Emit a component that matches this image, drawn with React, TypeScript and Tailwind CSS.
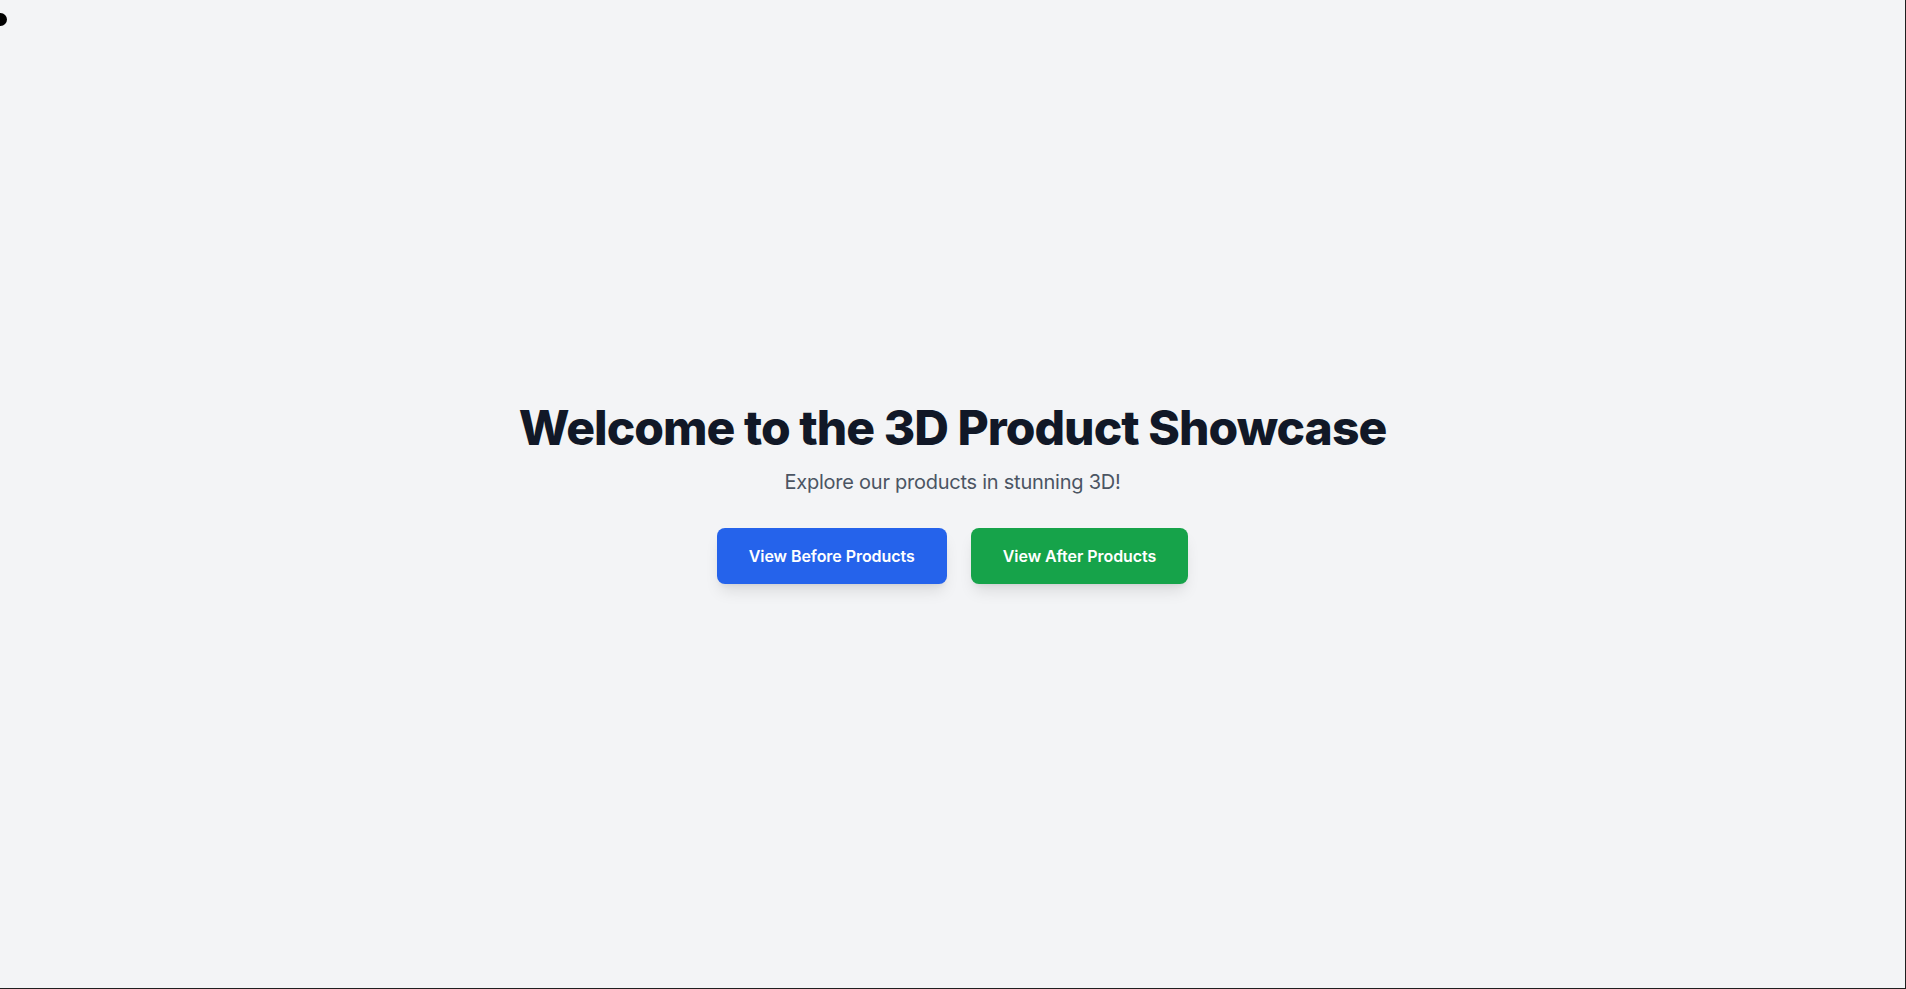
import React from "react";

export default function App() {
  return (
    <div
      className="relative min-h-screen h-[989px] bg-[#f3f4f6] border-r border-b border-[#1f1f1f] flex flex-col items-center justify-center overflow-hidden"
      style={{ fontFamily: "Inter, 'Noto Sans', sans-serif" }}
    >
      <div className="absolute left-[-6px] top-[13px] w-[13px] h-[13px] rounded-full bg-black" />
      <h1 className="text-5xl leading-none font-extrabold tracking-[-0.02em] text-[#111827] mb-4">
        Welcome to the 3D Product Showcase
      </h1>
      <p className="text-xl tracking-[-0.25px] text-[#4b5563] mb-8">Explore our products in stunning 3D!</p>
      <div className="flex gap-6">
        <button className="px-8 py-4 rounded-lg bg-[#2563eb] text-white font-semibold tracking-[-0.05px] shadow-lg">
          View Before Products
        </button>
        <button className="px-8 py-4 rounded-lg bg-[#16a34a] text-white font-semibold tracking-[-0.05px] shadow-lg">
          View After Products
        </button>
      </div>
    </div>
  );
}
